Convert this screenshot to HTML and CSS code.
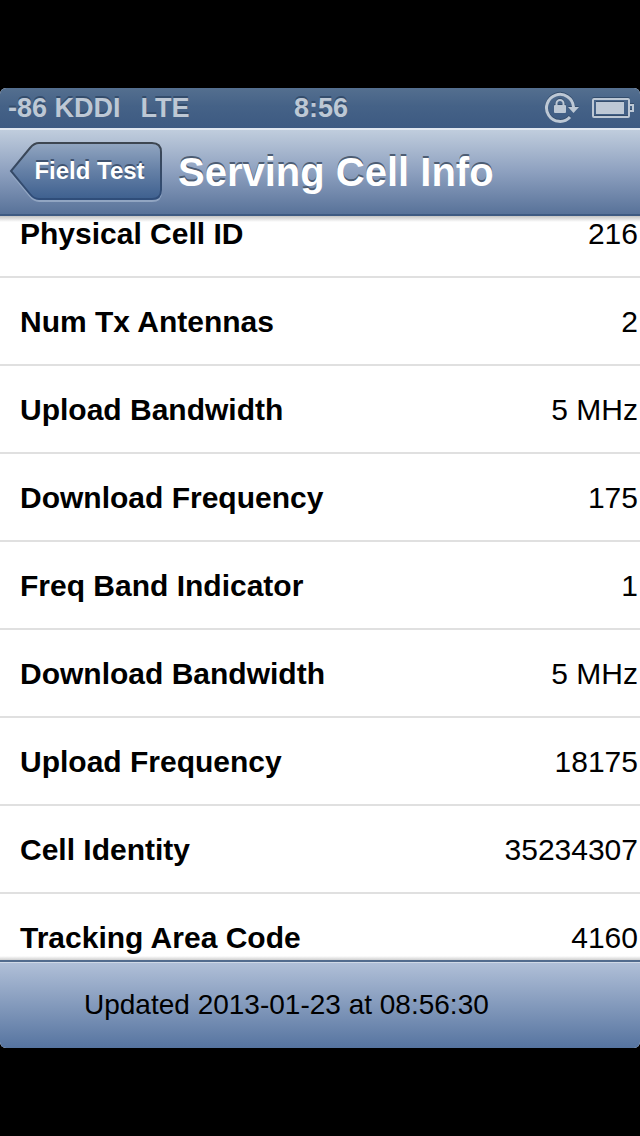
FILE: index.html
```html
<!DOCTYPE html>
<html lang="en">
<head>
<meta charset="utf-8">
<meta name="viewport" content="width=device-width, initial-scale=1">
<title>Serving Cell Info</title>
<link rel="stylesheet" href="styles.css">
</head>
<body>
<div class="screen">
  <div class="status">
    <div class="carrier"><span>-86 KDDI</span><span>LTE</span></div>
    <time class="clock">8:56</time>
    <div class="indicators">
      <svg class="lock" width="36" height="32" viewBox="0 0 36 32" aria-label="Rotation lock" role="img">
        <path d="M26 25A13.500 13.500 0 1 1 29.500 15" fill="none" stroke="currentColor" stroke-width="3"/>
        <path d="M24 15H35L29.500 21Z" fill="currentColor"/>
        <rect x="10" y="13" width="12" height="8" rx="1" fill="currentColor"/>
        <path d="M12.500 14V11.500A3.500 3.500 0 0 1 19.500 11.500V14" fill="none" stroke="currentColor" stroke-width="2"/>
      </svg>
      <svg class="battery" width="42" height="20" viewBox="0 0 42 20" aria-label="Battery" role="img">
        <rect x="1" y="1" width="36" height="18" rx="1" fill="none" stroke="currentColor" stroke-width="2"/>
        <rect x="4" y="4" width="28" height="12" fill="currentColor"/>
        <path d="M38 7H41V13H38" fill="none" stroke="currentColor" stroke-width="2"/>
      </svg>
    </div>
  </div>
  <header class="nav">
    <button class="back" type="button">
      <svg class="back-shape" width="154" height="62" viewBox="0 0 154 62" aria-hidden="true">
        <defs>
          <linearGradient id="face" x1="0" y1="0" x2="0" y2="1">
            <stop offset="0" stop-color="#92a6c1"/>
            <stop offset=".5" stop-color="#6580a6"/>
            <stop offset="1" stop-color="#3e608f"/>
          </linearGradient>
          <linearGradient id="edge" x1="0" y1="0" x2="0" y2="1">
            <stop offset="0" stop-color="#3d4651"/>
            <stop offset="1" stop-color="#2f4d7a"/>
          </linearGradient>
        </defs>
        <path d="M30 3H143Q152 3 152 12V51Q152 60 143 60H30Q25 60 21 55L2 32L21 8Q25 3 30 3Z" fill="none" stroke="#91a5c2" stroke-width="2"/>
        <path d="M30 2H143Q152 2 152 11V49Q152 58 143 58H30Q25 58 21 53L2 30L21 7Q25 2 30 2Z" fill="url(#face)" stroke="url(#edge)" stroke-width="2"/>
      </svg>
      <span class="back-label">Field Test</span>
    </button>
    <h1 class="title">Serving Cell Info</h1>
  </header>
  <main class="content">
    <table class="info">
      <tbody>
        <tr><th scope="row">Physical Cell ID</th><td>216</td></tr>
        <tr><th scope="row">Num Tx Antennas</th><td>2</td></tr>
        <tr><th scope="row">Upload Bandwidth</th><td>5 MHz</td></tr>
        <tr><th scope="row">Download Frequency</th><td>175</td></tr>
        <tr><th scope="row">Freq Band Indicator</th><td>1</td></tr>
        <tr><th scope="row">Download Bandwidth</th><td>5 MHz</td></tr>
        <tr><th scope="row">Upload Frequency</th><td>18175</td></tr>
        <tr><th scope="row">Cell Identity</th><td>35234307</td></tr>
        <tr><th scope="row">Tracking Area Code</th><td>4160</td></tr>
      </tbody>
    </table>
  </main>
  <footer class="toolbar">Updated 2013-01-23 at 08:56:30</footer>
</div>
</body>
</html>
```

FILE: styles.css
```css
* {
  box-sizing: border-box;
}

body {
  margin: 0;
  height: 100vh;
  padding: 88px 0;
  background: #000;
  color: #000;
  font-family: "Liberation Sans", Arial, Helvetica, sans-serif;
}

.screen {
  display: flex;
  flex-direction: column;
  height: 100%;
  overflow: hidden;
  border-radius: 6px;
  background: #fff;
}

.status {
  display: grid;
  grid-template-columns: 1fr auto 1fr;
  align-items: center;
  flex: none;
  height: 40px;
  padding: 0 6px 0 8px;
  background: linear-gradient(#546f8f, #456287 45%, #3d5a82);
  color: #bdc8d5;
  font-size: 27px;
  font-weight: bold;
  line-height: 40px;
  text-shadow: 0 -2px 0 #344d6c;
}

.carrier {
  display: flex;
  gap: 20px;
  white-space: nowrap;
}

.indicators {
  display: flex;
  align-items: center;
  justify-content: flex-end;
  gap: 12px;
}

.indicators svg {
  display: block;
  filter: drop-shadow(0 -1px 0 #344d6c);
}

.nav {
  display: flex;
  align-items: center;
  gap: 15px;
  flex: none;
  height: 88px;
  padding: 0 10px 0 9px;
  border-top: 2px solid #e0e7f0;
  border-bottom: 2px solid #3e5a82;
  background: linear-gradient(#c0cddd, #8da0bf 50%, #587299);
}

.back {
  position: relative;
  flex: none;
  width: 154px;
  height: 62px;
  padding: 0 17px 2px 24px;
  border: 0;
  background: none;
  color: #fff;
  font: bold 24px "Liberation Sans", Arial, Helvetica, sans-serif;
  text-shadow: 0 -2px 0 #405370;
  white-space: nowrap;
}

.back-shape {
  position: absolute;
  inset: 0;
}

.back-label {
  position: relative;
}

.title {
  margin: 0;
  color: #fff;
  font-size: 40px;
  line-height: 48px;
  text-shadow: 0 -2px 0 #4d5d73;
  white-space: nowrap;
}

.content {
  position: relative;
  flex: 1;
  min-height: 0;
  overflow: hidden;
}

.content::before,
.content::after {
  content: "";
  position: absolute;
  right: 0;
  left: 0;
  height: 6px;
}

.content::before {
  top: 0;
  background: linear-gradient(#c4c4c4, #fff0);
}

.content::after {
  bottom: 0;
  height: 4px;
  background: linear-gradient(#fff0, #d0d0d0);
}

/* The list is scrolled so that its first row is partly under the header. */
.info {
  width: 100%;
  margin-top: -26px;
  border-spacing: 0;
  font-size: 30px;
  line-height: 36px;
}

.info th,
.info td {
  height: 88px;
  padding: 2px 0 0;
  border-bottom: 2px solid #e0e0e0;
  white-space: nowrap;
}

.info th {
  padding-left: 20px;
  text-align: left;
}

.info td {
  padding-right: 2px;
  text-align: right;
}

.toolbar {
  flex: none;
  height: 88px;
  padding: 0 84px;
  border-top: 2px solid #526b8d;
  box-shadow: inset 0 1px 0 #d0d9e6;
  background: linear-gradient(#b1c0d8, #5674a0);
  font-size: 28px;
  line-height: 86px;
}
```
